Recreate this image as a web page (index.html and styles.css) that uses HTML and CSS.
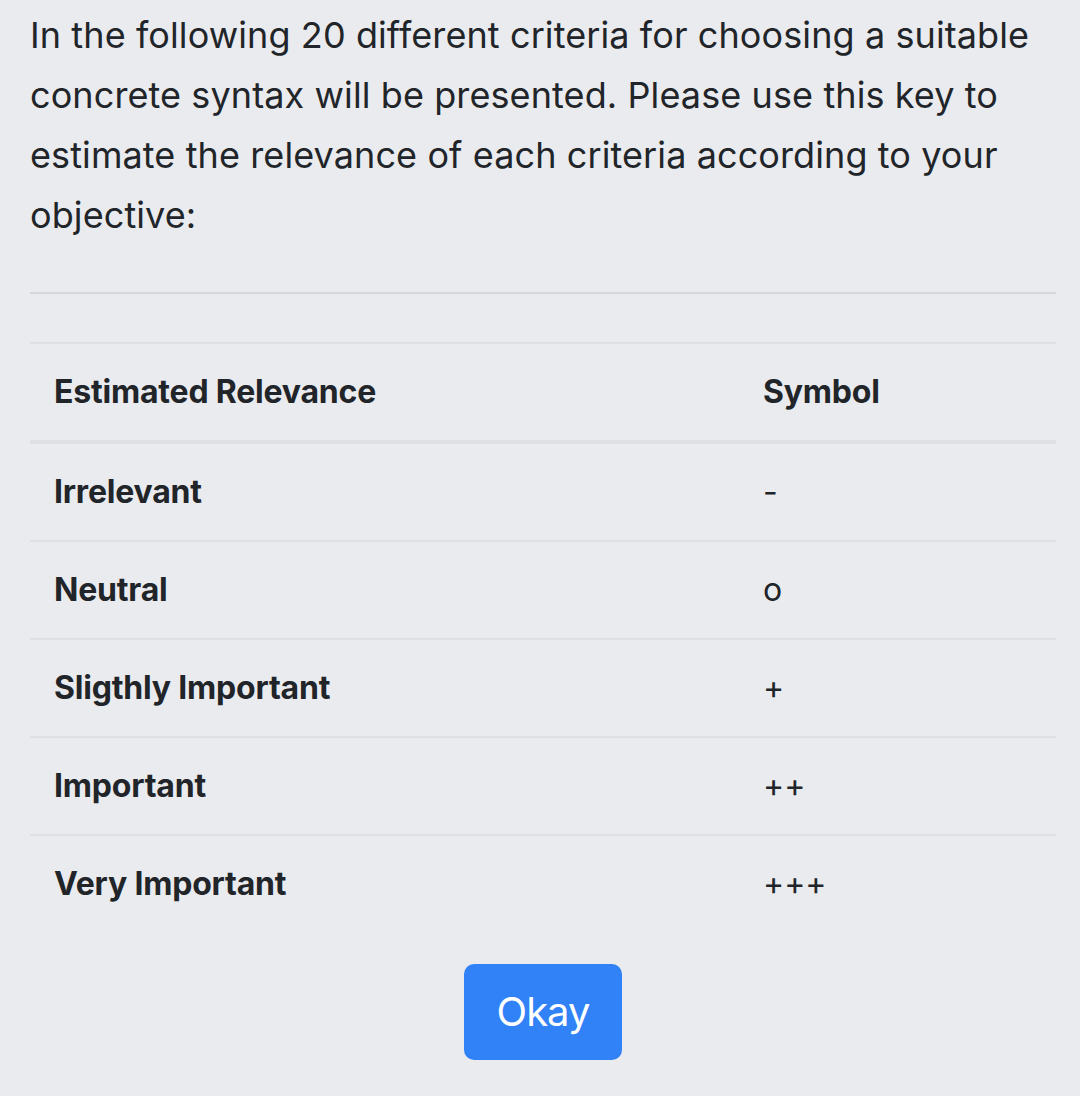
FILE: index.html
```html
<!DOCTYPE html>
<html lang="en">
<head>
<meta charset="utf-8">
<title>Relevance key</title>
<link rel="stylesheet" href="styles.css">
</head>
<body>
<main class="page">
  <p class="intro">In the following 20 different criteria for choosing a suitable concrete syntax will be presented. Please use this key to estimate the relevance of each criteria according to your objective:</p>
  <hr class="rule">
  <table class="key">
    <thead>
      <tr><th class="col-name">Estimated Relevance</th><th>Symbol</th></tr>
    </thead>
    <tbody>
      <tr><th>Irrelevant</th><td>-</td></tr>
      <tr><th>Neutral</th><td>o</td></tr>
      <tr><th>Sligthly Important</th><td>+</td></tr>
      <tr><th>Important</th><td>++</td></tr>
      <tr><th>Very Important</th><td>+++</td></tr>
    </tbody>
  </table>
  <div class="actions">
    <button class="btn" type="button">Okay</button>
  </div>
</main>
</body>
</html>
```
FILE: styles.css
```css
html, body {
  margin: 0;
  padding: 0;
  background: #eaebef;
}
body {
  font-family: Inter, "Noto Sans", "Liberation Sans", sans-serif;
  color: #212529;
  font-size: 32px;
  line-height: 48px;
}
.page {
  padding: 5px 24px 0 30px;
}
.intro {
  margin: 0;
  font-size: 36px;
  line-height: 60px;
  letter-spacing: 0.1px;
}
.rule {
  margin: 47px 0 48px;
  border: 0;
  border-top: 2px solid #d6d7db;
  height: 0;
}
.key {
  width: 100%;
  border-collapse: collapse;
}
.key th, .key td {
  text-align: left;
  padding: 24px;
  border-top: 2px solid #dfe0e4;
  vertical-align: top;
}
.key th {
  font-weight: 700;
  letter-spacing: -0.2px;
}
.key td {
  font-weight: 400;
}
.key thead th {
  border-bottom: 4px solid #dfe0e4;
}
.col-name {
  width: 661px;
}
.actions {
  display: flex;
  justify-content: center;
  margin-top: 32px;
}
.btn {
  font-family: inherit;
  font-size: 40px;
  line-height: 60px;
  letter-spacing: -1px;
  padding: 16px 31px;
  border: 2px solid #3182f6;
  background: #3182f6;
  color: #fff;
  border-radius: 10px;
}
```
